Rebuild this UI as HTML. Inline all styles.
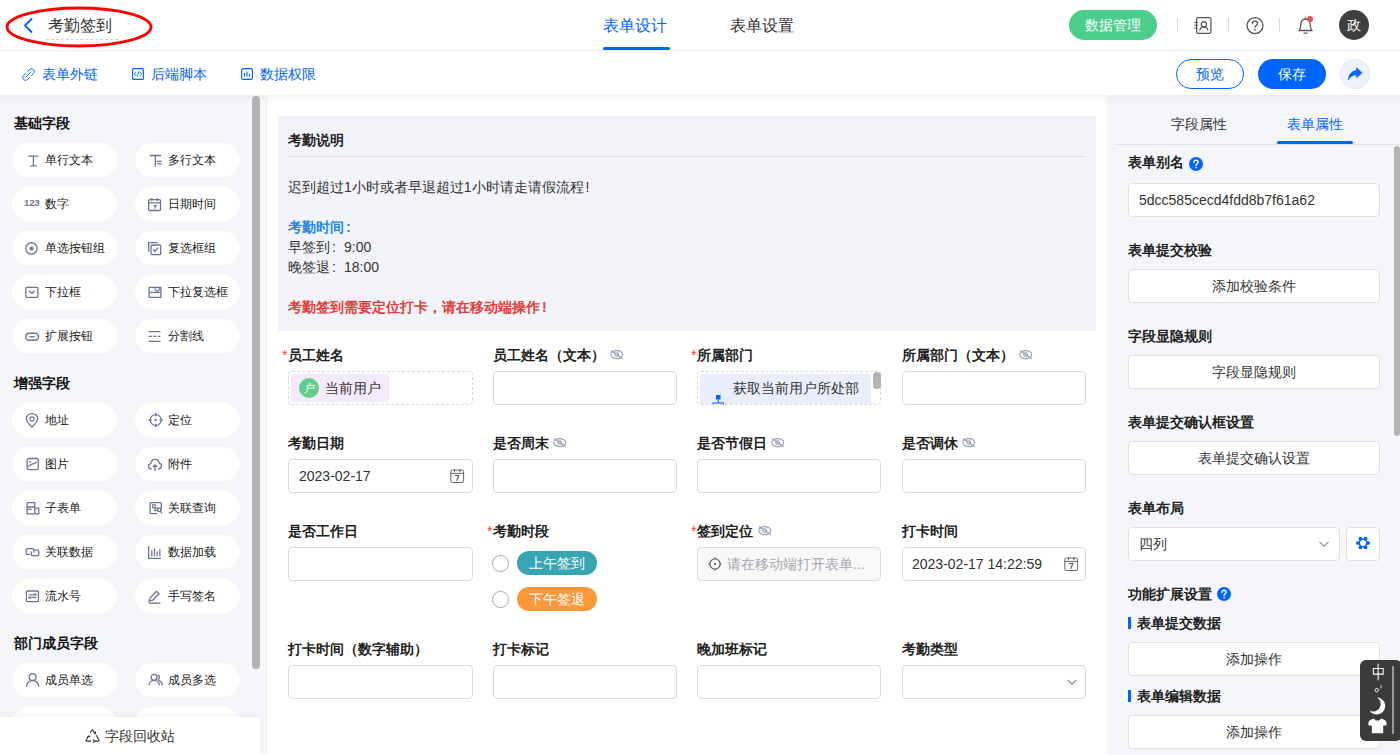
<!DOCTYPE html>
<html><head><meta charset="utf-8">
<style>
*{box-sizing:border-box;margin:0;padding:0}
html,body{width:1400px;height:755px;overflow:hidden;background:#fff;font-family:"Liberation Sans",sans-serif;color:#333;font-size:14px}
.a{position:absolute}
.t{position:absolute;white-space:nowrap;line-height:20px}
svg{position:absolute;overflow:visible}
/* header */
#hdr{position:absolute;left:0;top:0;width:1400px;height:51px;background:#fff;border-bottom:1px solid #ededed}
#tb{position:absolute;left:0;top:51px;width:1400px;height:44px;background:#fff}
#side{position:absolute;left:0;top:95px;width:268px;height:660px;background:#f4f6fa}
#canvas{position:absolute;left:268px;top:95px;width:838px;height:660px;background:#fff}
#rp{position:absolute;left:1106px;top:95px;width:294px;height:660px;background:#f4f6fa}
.shadow{position:absolute;left:0;top:95px;width:1400px;height:10px;background:linear-gradient(rgba(0,0,0,0.035),rgba(0,0,0,0.012) 50%,rgba(0,0,0,0))}
.blue{color:#0064ff}
.pill{position:absolute;width:105px;height:34px;border-radius:17px;background:#fff}
.pill .t{left:33px;top:7px;font-size:12px;color:#1a1a1a}
.pill svg{left:12.5px;top:10.5px}
.sec{position:absolute;left:14px;font-size:14px;font-weight:bold;color:#111;line-height:20px}
.lbl{position:absolute;font-size:14px;font-weight:bold;color:#222;line-height:20px;white-space:nowrap}
.req{color:#f04134;font-weight:normal;position:absolute;left:-6px;top:0}
.inp{position:absolute;width:185px;height:34px;border:1px solid #dcdcdc;border-radius:4px;background:#fff}
.rtitle{position:absolute;left:1128px;font-size:14px;font-weight:bold;color:#222;line-height:20px;white-space:nowrap}
.rbtn{position:absolute;left:1128px;width:252px;height:34px;border:1px solid #e0e0e0;border-radius:4px;background:#fff;text-align:center;line-height:32px;font-size:14px;color:#333}
</style></head><body>

<!-- HEADER -->
<div id="hdr"></div>
<svg style="left:0;top:0" width="160" height="50"><ellipse cx="79" cy="27" rx="72" ry="19" fill="none" stroke="#f00" stroke-width="2.9"/></svg>
<svg style="left:22px;top:17px" width="14" height="17" viewBox="0 0 14 17"><path d="M9.5 2 L3 8.5 L9.5 15" fill="none" stroke="#0064ff" stroke-width="1.8" stroke-linecap="round" stroke-linejoin="round"/></svg>
<div class="t" style="left:48px;top:16px;font-size:16px;line-height:20px;color:#333">考勤签到</div>
<div class="a" style="left:46px;top:39px;width:72px;border-top:1px dashed #d6d6d6"></div>

<div class="t blue" style="left:603px;top:16px;font-size:16px">表单设计</div>
<div class="a" style="left:603px;top:47px;width:67px;height:3px;border-radius:2px;background:#0064ff"></div>
<div class="t" style="left:730px;top:16px;font-size:16px;color:#333">表单设置</div>

<div class="a" style="left:1069px;top:10px;width:88px;height:30px;border-radius:15px;background:#4bcd8c;color:#fff;text-align:center;line-height:30px;font-size:14px">数据管理</div>
<div class="a" style="left:1177px;top:18px;width:1px;height:14px;background:#d9d9d9"></div>
<div class="a" style="left:1228px;top:18px;width:1px;height:14px;background:#d9d9d9"></div>
<div class="a" style="left:1279px;top:18px;width:1px;height:14px;background:#d9d9d9"></div>
<!-- contacts icon -->
<svg style="left:1194px;top:17px" width="18" height="17" viewBox="0 0 18 17"><rect x="2.6" y="0.6" width="14.3" height="15.8" rx="1.6" fill="none" stroke="#555" stroke-width="1.2"/><path d="M0.2 5.5h3.6M0.2 8.3h3.6M0.2 11h3.6" stroke="#555" stroke-width="1.1"/><circle cx="9.8" cy="7.2" r="2.6" fill="none" stroke="#555" stroke-width="1.2"/><path d="M5.6 13.6 C6 11.4 7.8 10.2 9.8 10.2 C11.8 10.2 13.6 11.4 14 13.6" fill="none" stroke="#555" stroke-width="1.2"/></svg>
<!-- help icon -->
<svg style="left:1246px;top:17px" width="18" height="18" viewBox="0 0 18 18"><circle cx="9" cy="8.6" r="8" fill="none" stroke="#555" stroke-width="1.3"/><path d="M6.5 6.6 C6.5 5 7.6 4.2 9 4.2 C10.4 4.2 11.5 5.1 11.5 6.4 C11.5 8.1 9 8.3 9 10.3" fill="none" stroke="#555" stroke-width="1.3" stroke-linecap="round"/><circle cx="9" cy="12.7" r="0.9" fill="#555"/></svg>
<!-- bell -->
<svg style="left:1297px;top:16px" width="18" height="19" viewBox="0 0 18 19"><path d="M2 14.5 C3.6 13 3.8 11.5 3.8 8.5 C3.8 5.2 6 3 8.5 3 C11 3 13.2 5.2 13.2 8.5 C13.2 11.5 13.4 13 15 14.5 Z" fill="none" stroke="#555" stroke-width="1.3" stroke-linejoin="round"/><path d="M7 17.2h3" stroke="#555" stroke-width="1.3" stroke-linecap="round"/><path d="M8.5 1.3v1.6" stroke="#555" stroke-width="1.2"/><circle cx="13" cy="3" r="3" fill="#eb4b4b"/></svg>
<div class="a" style="left:1339px;top:10px;width:30px;height:30px;border-radius:50%;background:#3f3f3f;color:#fff;text-align:center;line-height:30px;font-size:14px">政</div>

<!-- TOOLBAR -->
<div id="tb"></div>
<!-- link icon -->
<svg style="left:22px;top:68px" width="13" height="13" viewBox="0 0 13 13"><g fill="none" stroke="#0064ff" stroke-width="1" stroke-linecap="round"><path d="M5.6 3.4L7.4 1.6C8.5 0.5 10.3 0.5 11.4 1.6C12.5 2.7 12.5 4.5 11.4 5.6L9.6 7.4"/><path d="M7.4 9.6L5.6 11.4C4.5 12.5 2.7 12.5 1.6 11.4C0.5 10.3 0.5 8.5 1.6 7.4L3.4 5.6"/><path d="M4.6 8.4L8.4 4.6"/></g></svg>
<div class="t blue" style="left:42px;top:64px">表单外链</div>
<svg style="left:132px;top:68px" width="12" height="12" viewBox="0 0 12 12"><rect x="0.6" y="0.6" width="10.8" height="10.8" rx="1" fill="none" stroke="#0064ff" stroke-width="1.1"/><path d="M4.2 4 L2.3 6 L4.2 8 M7.8 4 L9.7 6 L7.8 8 M6.9 3.3 L5.1 8.7" fill="none" stroke="#0064ff" stroke-width="0.9"/></svg>
<div class="t blue" style="left:151px;top:64px">后端脚本</div>
<svg style="left:241px;top:68px" width="12" height="12" viewBox="0 0 12 12"><rect x="0.6" y="0.6" width="10.8" height="10.8" rx="1.5" fill="none" stroke="#0064ff" stroke-width="1.1"/><path d="M3.5 5v3.5 M6 3.5v5 M8.5 6v2.5" stroke="#0064ff" stroke-width="1.1"/></svg>
<div class="t blue" style="left:260px;top:64px">数据权限</div>

<div class="a blue" style="left:1176px;top:59px;width:68px;height:30px;border:1px solid #0064ff;border-radius:15px;text-align:center;line-height:28px;font-size:14px">预览</div>
<div class="a" style="left:1258px;top:59px;width:68px;height:30px;background:#0064ff;border-radius:15px;text-align:center;line-height:30px;font-size:14px;color:#fff">保存</div>
<div class="a" style="left:1340px;top:59px;width:30px;height:30px;border-radius:50%;background:#eef3ff;border:1px solid #dde7fc"></div>
<svg style="left:1346px;top:66px" width="18" height="16" viewBox="0 0 18 16"><path d="M10.4 1.6 L16.2 6.7 L10.4 11.9 V9.1 C7 9.1 4.4 10.6 2.2 14 C2.5 8.6 5.6 4.7 10.4 4.4 Z" fill="#0064ff" stroke="#0064ff" stroke-width="0.4" stroke-linejoin="round"/></svg>

<div id="side"></div>
<div id="canvas"></div>
<div id="rp"></div>
<div class="shadow"></div>
<div class="sec" style="top:113px">基础字段</div>
<div class="pill" style="left:12px;top:143px"><svg width="14" height="14" viewBox="0 0 13 13"><path d="M3.4 1.95H12.1M7.8 1.95V11.05M5.3 11.05H10.4" stroke="#6f7590" stroke-width="1.15" fill="none" stroke-linecap="round"/></svg><div class="t">单行文本</div></div>
<div class="pill" style="left:135px;top:143px"><svg width="14" height="14" viewBox="0 0 13 13"><path d="M1.6 1.4H12.3M6.8 1.4V11.8M8.5 6.9H12.9M8.5 9.2H12.9" stroke="#6f7590" stroke-width="1.2" fill="none"/></svg><div class="t">多行文本</div></div>
<div class="pill" style="left:12px;top:187px"><div class="t" style="left:12px;top:6px;font-size:9.6px;font-weight:bold;color:#6f7590;letter-spacing:-0.2px">123</div><div class="t">数字</div></div>
<div class="pill" style="left:135px;top:187px"><svg width="14" height="14" viewBox="0 0 13 13"><rect x="0.6" y="1.6" width="11" height="10" rx="1" fill="none" stroke="#6f7590" stroke-width="1.2"/><path d="M0.6 4.6h11M3.5 0v3M8.5 0v3M5 7h2.5l-1.5 3" stroke="#6f7590" stroke-width="1.1" fill="none"/></svg><div class="t">日期时间</div></div>
<div class="pill" style="left:12px;top:231px"><svg width="14" height="14" viewBox="0 0 13 13"><circle cx="6" cy="6" r="5.3" fill="none" stroke="#6f7590" stroke-width="1.2"/><circle cx="6" cy="6" r="1.8" fill="#6f7590"/></svg><div class="t">单选按钮组</div></div>
<div class="pill" style="left:135px;top:231px"><svg width="14" height="14" viewBox="0 0 13 13"><path d="M0.6 9V0.6H9" fill="none" stroke="#6f7590" stroke-width="1.2"/><rect x="2.8" y="2.8" width="9" height="9" rx="1" fill="none" stroke="#6f7590" stroke-width="1.2"/><path d="M4.8 7l1.6 1.6 3.2-3.4" fill="none" stroke="#6f7590" stroke-width="1.2"/></svg><div class="t">复选框组</div></div>
<div class="pill" style="left:12px;top:275px"><svg width="14" height="14" viewBox="0 0 13 13"><rect x="0.8" y="1.2" width="11.2" height="9.4" rx="0.8" fill="none" stroke="#6f7590" stroke-width="1.2"/><path d="M3.9 4.6l2.5 2.2 2.5-2.2" fill="none" stroke="#6f7590" stroke-width="1.2"/></svg><div class="t">下拉框</div></div>
<div class="pill" style="left:135px;top:275px"><svg width="14" height="14" viewBox="0 0 13 13"><path d="M1 1.2H12V10.6H1Z M1 5.9H12" fill="none" stroke="#6f7590" stroke-width="1.2" stroke-linejoin="round"/><path d="M6.5 1.2V3.2C6.5 4 7.1 4.6 7.9 4.6H9.8L11.4 1.4" fill="none" stroke="#6f7590" stroke-width="1.1"/></svg><div class="t">下拉复选框</div></div>
<div class="pill" style="left:12px;top:319px"><svg width="14" height="14" viewBox="0 0 13 13"><rect x="0.6" y="3" width="12" height="6.5" rx="3.2" fill="none" stroke="#6f7590" stroke-width="1.3"/><path d="M4 6.2h5" stroke="#6f7590" stroke-width="1.2"/></svg><div class="t">扩展按钮</div></div>
<div class="pill" style="left:135px;top:319px"><svg width="14" height="14" viewBox="0 0 13 13"><path d="M0.5 1.5h11M0.5 10.5h11M0.5 6h3M5 6h2.5M9 6h2.5" stroke="#6f7590" stroke-width="1.2" fill="none"/></svg><div class="t">分割线</div></div>
<div class="sec" style="top:373px">增强字段</div>
<div class="pill" style="left:12px;top:403px"><svg width="14" height="14" viewBox="0 0 13 13"><path d="M6.5 12.2C2.8 8.5 1.2 6.2 1.2 4.4 1.2 1.5 3.5 -0.4 6.5 -0.4s5.3 1.9 5.3 4.8c0 1.8-1.6 4.1-5.3 7.8z" fill="none" stroke="#6f7590" stroke-width="1.2"/><circle cx="6.5" cy="4.6" r="2" fill="none" stroke="#6f7590" stroke-width="1.1"/></svg><div class="t">地址</div></div>
<div class="pill" style="left:135px;top:403px"><svg width="14" height="14" viewBox="0 0 13 13"><circle cx="7.15" cy="5.6" r="5.1" fill="none" stroke="#6f7590" stroke-width="1.2"/><circle cx="7.15" cy="5.6" r="1.1" fill="#6f7590"/><path d="M7.15 -1.1V2M7.15 9.2V12.3M0.45 5.6H3.55M10.75 5.6H13.85" stroke="#6f7590" stroke-width="1.2"/></svg><div class="t">定位</div></div>
<div class="pill" style="left:12px;top:447px"><svg width="14" height="14" viewBox="0 0 13 13"><rect x="1.95" y="0.46" width="10.4" height="10.24" rx="1.8" fill="none" stroke="#6f7590" stroke-width="1.2"/><path d="M3 8.4C4.3 6 5.8 5.6 8 5.2S10.3 4.4 11 3.4" fill="none" stroke="#6f7590" stroke-width="1.1"/><circle cx="4.6" cy="3.6" r="0.9" fill="#6f7590"/></svg><div class="t">图片</div></div>
<div class="pill" style="left:135px;top:447px"><svg width="14" height="14" viewBox="0 0 13 13"><path d="M3.5 10H2.8C1.5 10 0.6 8.9 0.6 7.6c0-1.2 0.9-2.2 2-2.3C2.9 3 4.6 1.3 6.6 1.3c1.9 0 3.5 1.5 3.8 3.4 1.2 0.2 2.1 1.3 2.1 2.5 0 1.5-1.1 2.8-2.6 2.8H9.5" fill="none" stroke="#6f7590" stroke-width="1.2"/><path d="M6.5 12V6.5M4.6 8.3l1.9-1.9 1.9 1.9" fill="none" stroke="#6f7590" stroke-width="1.2"/></svg><div class="t">附件</div></div>
<div class="pill" style="left:12px;top:491px"><svg width="14" height="14" viewBox="0 0 13 13"><path d="M1.95 0.65H9.1V10.96H1.95Z M1.95 4.64H9.1 M2.7 6.87H6.1 M9.1 5.66H12.8V10.96H9.1" fill="none" stroke="#6f7590" stroke-width="1.2" stroke-linejoin="round"/></svg><div class="t">子表单</div></div>
<div class="pill" style="left:135px;top:491px"><svg width="14" height="14" viewBox="0 0 13 13"><path d="M8.6 10.7H2.8C2.3 10.7 1.95 10.3 1.95 9.8V1.5C1.95 1 2.3 0.65 2.8 0.65H11.5C12 0.65 12.35 1 12.35 1.5V8.1" fill="none" stroke="#6f7590" stroke-width="1.2"/><rect x="4.3" y="2.5" width="2.4" height="2.9" fill="none" stroke="#6f7590" stroke-width="1"/><rect x="6.3" y="5.6" width="2.6" height="2.4" fill="none" stroke="#6f7590" stroke-width="1"/><circle cx="10.4" cy="7.3" r="1.6" fill="none" stroke="#6f7590" stroke-width="1.1"/><path d="M11.5 8.5L12.8 10.5" stroke="#6f7590" stroke-width="1.1"/></svg><div class="t">关联查询</div></div>
<div class="pill" style="left:12px;top:535px"><svg width="14" height="14" viewBox="0 0 13 13"><path d="M4.6 7.7H2.3C1.6 7.7 1 7.1 1 6.4V3.8C1 3.1 1.6 2.5 2.3 2.5H6.9C7.6 2.5 8.2 3.1 8.2 3.8V6.2M8.2 3.9H11.5C12.2 3.9 12.8 4.5 12.8 5.2V7.6C12.8 8.3 12.2 8.9 11.5 8.9H7.1C6.4 8.9 5.85 8.3 5.85 7.6V5" fill="none" stroke="#6f7590" stroke-width="1.2"/></svg><div class="t">关联数据</div></div>
<div class="pill" style="left:135px;top:535px"><svg width="14" height="14" viewBox="0 0 13 13"><path d="M0.6 0v11.5H12M3.5 4v5.5M6 2v7.5M8.5 5v4.5M11 3v6.5" fill="none" stroke="#6f7590" stroke-width="1.2"/></svg><div class="t">数据加载</div></div>
<div class="pill" style="left:12px;top:579px"><svg width="14" height="14" viewBox="0 0 13 13"><rect x="1.3" y="0.93" width="11.2" height="9.77" rx="0.8" fill="none" stroke="#6f7590" stroke-width="1.2"/><path d="M3.4 4.6H10.6L9 3.3M10.6 6.9H3.4L5 8.2" fill="none" stroke="#6f7590" stroke-width="1.1" stroke-linejoin="round"/></svg><div class="t">流水号</div></div>
<div class="pill" style="left:135px;top:579px"><svg width="14" height="14" viewBox="0 0 13 13"><path d="M1 10.5l1-3.3 6-6 2.3 2.3-6 6z M0.5 12.2h11" fill="none" stroke="#6f7590" stroke-width="1.2"/></svg><div class="t">手写签名</div></div>
<div class="sec" style="top:633px">部门成员字段</div>
<div class="pill" style="left:12px;top:663px"><svg width="14" height="14" viewBox="0 0 13 13"><circle cx="7.06" cy="2.9" r="3.2" fill="none" stroke="#6f7590" stroke-width="1.2"/><path d="M1.4 11.9A5.7 5.9 0 0 1 12.8 11.9" fill="none" stroke="#6f7590" stroke-width="1.2"/></svg><div class="t">成员单选</div></div>
<div class="pill" style="left:135px;top:663px"><svg width="14" height="14" viewBox="0 0 13 13"><circle cx="5.66" cy="3.1" r="2.8" fill="none" stroke="#6f7590" stroke-width="1.2"/><path d="M0.93 10.4A4.85 4.9 0 0 1 10.6 10.4M9 0.5A2.8 2.8 0 0 1 9 5.6M9.6 5.9A5 5 0 0 1 13.3 10.4" fill="none" stroke="#6f7590" stroke-width="1.2"/></svg><div class="t">成员多选</div></div>
<div class="pill" style="left:12px;top:707px"><svg width="14" height="14" viewBox="0 0 13 13"><circle cx="7.06" cy="2.9" r="3.2" fill="none" stroke="#6f7590" stroke-width="1.2"/><path d="M1.4 11.9A5.7 5.9 0 0 1 12.8 11.9" fill="none" stroke="#6f7590" stroke-width="1.2"/></svg><div class="t"></div></div>
<div class="pill" style="left:135px;top:707px"><svg width="14" height="14" viewBox="0 0 13 13"><circle cx="5.66" cy="3.1" r="2.8" fill="none" stroke="#6f7590" stroke-width="1.2"/><path d="M0.93 10.4A4.85 4.9 0 0 1 10.6 10.4M9 0.5A2.8 2.8 0 0 1 9 5.6M9.6 5.9A5 5 0 0 1 13.3 10.4" fill="none" stroke="#6f7590" stroke-width="1.2"/></svg><div class="t"></div></div>
<div class="a" style="left:252px;top:96px;width:8px;height:573px;border-radius:4px;background:#b3b3b3"></div>
<div class="a" style="left:0;top:717px;width:260px;height:38px;background:#fff;box-shadow:0 -2px 6px rgba(0,0,0,0.04)"></div>
<svg style="left:85px;top:729px" width="15" height="14" viewBox="0 0 15 14"><path d="M5.3 3.2L7.5 0.8l2.4 3.6M11.4 6.6l2.6 4.6c0.2 0.4-0.1 0.9-0.5 0.9H9.5M5.5 12.1H1.5c-0.4 0-0.7-0.5-0.5-0.9l2.3-4" fill="none" stroke="#333" stroke-width="1.1" stroke-linecap="round"/><path d="M9 3.6l1.2 0.9 0.4-1.5M8.3 10.9l1.2 1.2-1.2 1.1M2.6 8.5l0.7-1.3 1.5 0.4" fill="none" stroke="#333" stroke-width="1.1" stroke-linecap="round"/></svg>
<div class="t" style="left:105px;top:726px;font-size:14px;color:#333">字段回收站</div>
<div class="a" style="left:278px;top:116px;width:818px;height:215px;background:#f3f4f9"></div>
<div class="lbl" style="left:288px;top:130px">考勤说明</div>
<div class="a" style="left:288px;top:156px;width:798px;height:1px;background:#dcdde3"></div>
<div class="t" style="left:288px;top:177px;color:#333">迟到超过1小时或者早退超过1小时请走请假流程<span style="display:inline-block;width:14px;padding-left:2px">!</span></div>
<div class="t" style="left:288px;top:217px;color:#2188e8;font-weight:bold">考勤时间<span style="display:inline-block;width:14px;padding-left:2px">:</span></div>
<div class="t" style="left:288px;top:237px;color:#333">早签到<span style="display:inline-block;width:14px;padding-left:2px">:</span>9:00</div>
<div class="t" style="left:288px;top:257px;color:#333">晚签退<span style="display:inline-block;width:14px;padding-left:2px">:</span>18:00</div>
<div class="t" style="left:288px;top:297px;color:#e0403b;font-weight:bold">考勤签到需要定位打卡，请在移动端操作<span style="display:inline-block;width:14px;padding-left:2px">!</span></div>
<div class="lbl" style="left:288px;top:345px"><span class="req">*</span>员工姓名</div>
<div class="inp" style="width:185px;left:288px;top:371px;border:1px dashed #d9d9d9"></div>
<div class="a" style="left:291px;top:374px;width:98px;height:28px;background:#f5eafb;border-radius:3px"></div>
<div class="a" style="left:299px;top:378px;width:20px;height:20px;border-radius:50%;background:#5fd08b;color:#fff;font-size:11px;line-height:20px;text-align:center">户</div>
<div class="t" style="left:325px;top:378px;font-size:14px;color:#333">当前用户</div>
<div class="lbl" style="left:493px;top:345px">员工姓名（文本）</div>
<svg style="left:610px;top:350px" width="15" height="11" viewBox="0 0 15 11"><ellipse cx="6.7" cy="4.6" rx="6" ry="4" fill="none" stroke="#98a0b6" stroke-width="1.1"/><circle cx="6.7" cy="4.6" r="1.9" fill="none" stroke="#98a0b6" stroke-width="1.1"/><path d="M0.9 0.5l12 8.3" stroke="#98a0b6" stroke-width="1.1"/></svg>
<div class="inp" style="width:184px;left:493px;top:371px;"></div>
<div class="lbl" style="left:697px;top:345px"><span class="req">*</span>所属部门</div>
<div class="inp" style="width:184px;left:697px;top:371px;border:1px dashed #d9d9d9;overflow:hidden"><div class="a" style="left:2px;top:2px;width:171px;height:40px;background:#e9eefd;border-radius:3px"></div></div>
<div class="t" style="left:733px;top:378px;color:#333">获取当前用户所处部</div>
<svg style="left:711px;top:394px" width="14" height="11" viewBox="0 0 14 11"><rect x="5" y="1" width="4.5" height="4.5" fill="#0064ff"/><path d="M7.2 5.5v3M2 10.5V9h10.5v1.5" fill="none" stroke="#0064ff" stroke-width="1.1"/></svg>
<div class="a" style="left:873px;top:372px;width:8px;height:17px;border-radius:4px;background:#b3b3b3"></div>
<div class="lbl" style="left:902px;top:345px">所属部门（文本）</div>
<svg style="left:1019px;top:350px" width="15" height="11" viewBox="0 0 15 11"><ellipse cx="6.7" cy="4.6" rx="6" ry="4" fill="none" stroke="#98a0b6" stroke-width="1.1"/><circle cx="6.7" cy="4.6" r="1.9" fill="none" stroke="#98a0b6" stroke-width="1.1"/><path d="M0.9 0.5l12 8.3" stroke="#98a0b6" stroke-width="1.1"/></svg>
<div class="inp" style="width:184px;left:902px;top:371px;"></div>
<div class="lbl" style="left:288px;top:433px">考勤日期</div>
<div class="inp" style="width:185px;left:288px;top:459px;"></div>
<div class="t" style="left:299px;top:466px">2023-02-17</div>
<svg style="left:450px;top:469px" width="15" height="14" viewBox="0 0 15 14"><rect x="0.8" y="1.1" width="12.8" height="12.4" rx="1.6" fill="none" stroke="#666" stroke-width="1"/><path d="M0.8 4.4h12.8M4.5 0v3.2M9.8 0v3.2" stroke="#666" stroke-width="1"/><path d="M5 6.5h3.8L6.7 11.9" fill="none" stroke="#555" stroke-width="1.1"/></svg>
<div class="lbl" style="left:493px;top:433px">是否周末</div>
<svg style="left:553px;top:438px" width="15" height="11" viewBox="0 0 15 11"><ellipse cx="6.7" cy="4.6" rx="6" ry="4" fill="none" stroke="#98a0b6" stroke-width="1.1"/><circle cx="6.7" cy="4.6" r="1.9" fill="none" stroke="#98a0b6" stroke-width="1.1"/><path d="M0.9 0.5l12 8.3" stroke="#98a0b6" stroke-width="1.1"/></svg>
<div class="inp" style="width:184px;left:493px;top:459px;"></div>
<div class="lbl" style="left:697px;top:433px">是否节假日</div>
<svg style="left:771px;top:438px" width="15" height="11" viewBox="0 0 15 11"><ellipse cx="6.7" cy="4.6" rx="6" ry="4" fill="none" stroke="#98a0b6" stroke-width="1.1"/><circle cx="6.7" cy="4.6" r="1.9" fill="none" stroke="#98a0b6" stroke-width="1.1"/><path d="M0.9 0.5l12 8.3" stroke="#98a0b6" stroke-width="1.1"/></svg>
<div class="inp" style="width:184px;left:697px;top:459px;"></div>
<div class="lbl" style="left:902px;top:433px">是否调休</div>
<svg style="left:962px;top:438px" width="15" height="11" viewBox="0 0 15 11"><ellipse cx="6.7" cy="4.6" rx="6" ry="4" fill="none" stroke="#98a0b6" stroke-width="1.1"/><circle cx="6.7" cy="4.6" r="1.9" fill="none" stroke="#98a0b6" stroke-width="1.1"/><path d="M0.9 0.5l12 8.3" stroke="#98a0b6" stroke-width="1.1"/></svg>
<div class="inp" style="width:184px;left:902px;top:459px;"></div>
<div class="lbl" style="left:288px;top:521px">是否工作日</div>
<div class="inp" style="width:185px;left:288px;top:547px;"></div>
<div class="lbl" style="left:493px;top:521px"><span class="req">*</span>考勤时段</div>
<div class="a" style="left:492px;top:555px;width:16.5px;height:16.5px;border:1px solid #a9abc6;border-radius:50%;background:#fff"></div>
<div class="a" style="left:517px;top:551px;width:80px;height:24px;border-radius:12px;background:#38a6b2;color:#fff;text-align:center;line-height:24px;font-size:14px">上午签到</div>
<div class="a" style="left:492px;top:591px;width:16.5px;height:16.5px;border:1px solid #a9abc6;border-radius:50%;background:#fff"></div>
<div class="a" style="left:517px;top:587px;width:80px;height:24px;border-radius:12px;background:#fb983a;color:#fff;text-align:center;line-height:24px;font-size:14px">下午签退</div>
<div class="lbl" style="left:697px;top:521px"><span class="req">*</span>签到定位</div>
<svg style="left:758px;top:526px" width="15" height="11" viewBox="0 0 15 11"><ellipse cx="6.7" cy="4.6" rx="6" ry="4" fill="none" stroke="#98a0b6" stroke-width="1.1"/><circle cx="6.7" cy="4.6" r="1.9" fill="none" stroke="#98a0b6" stroke-width="1.1"/><path d="M0.9 0.5l12 8.3" stroke="#98a0b6" stroke-width="1.1"/></svg>
<div class="inp" style="width:184px;left:697px;top:547px;background:#f8f8f9"></div>
<svg style="left:708px;top:557px" width="14" height="14" viewBox="0 0 14 14"><circle cx="7" cy="7" r="5.2" fill="none" stroke="#555" stroke-width="1.1"/><circle cx="7" cy="7" r="1.1" fill="#555"/><path d="M7 0.5v2M7 11.5v2M0.5 7h2M11.5 7h2" stroke="#555" stroke-width="1.1"/></svg>
<div class="t" style="left:727px;top:554px;color:#a3a6ad">请在移动端打开表单...</div>
<div class="lbl" style="left:902px;top:521px">打卡时间</div>
<div class="inp" style="width:184px;left:902px;top:547px;"></div>
<div class="t" style="left:912px;top:554px">2023-02-17 14:22:59</div>
<svg style="left:1064px;top:557px" width="15" height="14" viewBox="0 0 15 14"><rect x="0.8" y="1.1" width="12.8" height="12.4" rx="1.6" fill="none" stroke="#666" stroke-width="1"/><path d="M0.8 4.4h12.8M4.5 0v3.2M9.8 0v3.2" stroke="#666" stroke-width="1"/><path d="M5 6.5h3.8L6.7 11.9" fill="none" stroke="#555" stroke-width="1.1"/></svg>
<div class="lbl" style="left:288px;top:639px">打卡时间（数字辅助）</div>
<div class="inp" style="width:185px;left:288px;top:665px;"></div>
<div class="lbl" style="left:493px;top:639px">打卡标记</div>
<div class="inp" style="width:184px;left:493px;top:665px;"></div>
<div class="lbl" style="left:697px;top:639px">晚加班标记</div>
<div class="inp" style="width:184px;left:697px;top:665px;"></div>
<div class="lbl" style="left:902px;top:639px">考勤类型</div>
<div class="inp" style="width:184px;left:902px;top:665px;"></div>
<svg style="left:1066px;top:678px" width="12" height="8" viewBox="0 0 12 8"><path d="M1.5 1.8l4.5 4.4 4.5-4.4" fill="none" stroke="#888" stroke-width="1.1"/></svg>
<div class="t" style="left:1171px;top:114px;color:#333">字段属性</div>
<div class="t blue" style="left:1287px;top:114px">表单属性</div>
<div class="a" style="left:1114px;top:144px;width:286px;height:1px;background:#e3e3e3"></div>
<div class="a" style="left:1277px;top:141px;width:76px;height:3px;border-radius:1.5px;background:#0064ff"></div>
<div class="a" style="left:1394px;top:146px;width:6px;height:290px;border-radius:3px;background:#b3b3b3"></div>
<div class="rtitle" style="top:152px">表单别名</div>
<svg style="left:1189px;top:157px" width="14" height="14" viewBox="0 0 14 14"><circle cx="7" cy="7" r="7" fill="#0064ff"/><path d="M4.9 5.4C4.9 4.1 5.8 3.3 7 3.3s2.1 0.8 2.1 1.9c0 1.5-2 1.6-2 3.2" fill="none" stroke="#fff" stroke-width="1.4" stroke-linecap="round"/><circle cx="7.1" cy="10.6" r="0.9" fill="#fff"/></svg>
<div class="a" style="left:1128px;top:183px;width:252px;height:34px;border:1px solid #e0e0e0;border-radius:4px;background:#fff"></div>
<div class="t" style="left:1139px;top:190px;color:#333">5dcc585cecd4fdd8b7f61a62</div>
<div class="rtitle" style="top:240px">表单提交校验</div>
<div class="rbtn" style="top:269px">添加校验条件</div>
<div class="rtitle" style="top:326px">字段显隐规则</div>
<div class="rbtn" style="top:355px">字段显隐规则</div>
<div class="rtitle" style="top:412px">表单提交确认框设置</div>
<div class="rbtn" style="top:441px">表单提交确认设置</div>
<div class="rtitle" style="top:498px">表单布局</div>
<div class="a" style="left:1128px;top:527px;width:212px;height:34px;border:1px solid #e0e0e0;border-radius:4px;background:#fff"></div>
<div class="t" style="left:1139px;top:534px;color:#333">四列</div>
<svg style="left:1318px;top:540px" width="12" height="8" viewBox="0 0 12 8"><path d="M1.5 1.8l4.5 4.4 4.5-4.4" fill="none" stroke="#888" stroke-width="1.1"/></svg>
<div class="a" style="left:1346px;top:527px;width:34px;height:34px;border:1px solid #e0e0e0;border-radius:4px;background:#fff"></div>
<svg style="left:1355px;top:535px" width="16" height="16" viewBox="0 0 16 16"><g fill="#0064ff"><polygon points="13.20,8.00 10.60,12.50 5.40,12.50 2.80,8.00 5.40,3.50 10.60,3.50"/><circle cx="13.20" cy="8.00" r="1.85"/><circle cx="10.60" cy="12.50" r="1.85"/><circle cx="5.40" cy="12.50" r="1.85"/><circle cx="2.80" cy="8.00" r="1.85"/><circle cx="5.40" cy="3.50" r="1.85"/><circle cx="10.60" cy="3.50" r="1.85"/></g><circle cx="8" cy="8" r="3" fill="#fff"/></svg>
<div class="rtitle" style="top:584px">功能扩展设置</div>
<svg style="left:1217px;top:587px" width="14" height="14" viewBox="0 0 14 14"><circle cx="7" cy="7" r="7" fill="#0064ff"/><path d="M4.9 5.4C4.9 4.1 5.8 3.3 7 3.3s2.1 0.8 2.1 1.9c0 1.5-2 1.6-2 3.2" fill="none" stroke="#fff" stroke-width="1.4" stroke-linecap="round"/><circle cx="7.1" cy="10.6" r="0.9" fill="#fff"/></svg>
<div class="a" style="left:1128px;top:617px;width:3px;height:12px;background:#0064ff"></div>
<div class="rtitle" style="left:1137px;top:613px;font-size:14px">表单提交数据</div>
<div class="rbtn" style="top:642px">添加操作</div>
<div class="a" style="left:1128px;top:690px;width:3px;height:12px;background:#0064ff"></div>
<div class="rtitle" style="left:1137px;top:686px;font-size:14px">表单编辑数据</div>
<div class="rbtn" style="top:715px">添加操作</div>
<div class="a" style="left:1360px;top:660px;width:42px;height:81px;border-radius:6px;background:#3b3b3b"></div>
<div class="a" style="left:1392px;top:666px;width:1.5px;height:68px;background:#999"></div>
<svg style="left:1371px;top:663px" width="14" height="18" viewBox="0 0 14 18"><path d="M2.3 5.5h9.9v5.6H2.5z M7.1 0.8v16.5" fill="none" stroke="#fff" stroke-width="1.05"/></svg>
<svg style="left:1374px;top:684px" width="10" height="9" viewBox="0 0 10 9"><circle cx="2.8" cy="6.2" r="1.7" fill="none" stroke="#fff" stroke-width="0.9"/><path d="M6.5 1.2C7.6 1.5 7.8 3 6.2 4.4" fill="none" stroke="#fff" stroke-width="0.9"/></svg>
<svg style="left:1369px;top:697px" width="17" height="18" viewBox="0 0 17 18"><path d="M8 0.5A8.5 8.5 0 1 1 0.5 13.5 7 7 0 0 0 8 0.5z" fill="#fff"/></svg>
<svg style="left:1368px;top:718px" width="19" height="16" viewBox="0 0 19 16"><path d="M6 0.5C3 1.2 0.8 2.5 0.3 4.5L0.5 7.5h3.3V15.2h11.4V7.5h3.3l0.2-3C18.2 2.5 16 1.2 13 0.5 12.5 1.8 11.2 2.6 9.5 2.6S6.5 1.8 6 0.5z" fill="#fff"/></svg>
</body></html>
